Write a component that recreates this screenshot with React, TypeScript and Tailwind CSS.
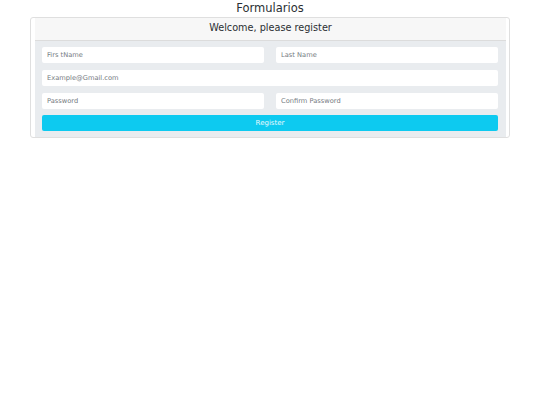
import React from "react";

const fields: { placeholder: string; type: string }[][] = [
  [
    { placeholder: "Firs tName", type: "text" },
    { placeholder: "Last Name", type: "text" },
  ],
  [{ placeholder: "Example@Gmail.com", type: "email" }],
  [
    { placeholder: "Password", type: "password" },
    { placeholder: "Confirm Password", type: "password" },
  ],
];

const Input = ({ placeholder, type }: { placeholder: string; type: string }) => (
  <input
    type={type}
    placeholder={placeholder}
    className="h-[16px] w-full rounded-[2px] bg-white px-[5px] text-[6.7px] text-[#212529] outline-none placeholder:text-[#757b82]"
  />
);

export default function App() {
  return (
    <div className="min-h-[405px] bg-white font-['DejaVu_Sans',sans-serif] text-[#2b2f33]">
      {/* Title */}
      <h1 className="text-center text-[11.5px] leading-[17px]">Formularios</h1>

      {/* Card */}
      <div className="mx-[30px] w-[480px] rounded-[3px] border border-[#dfdfdf] pl-[4px] pr-[3px]">
        {/* Card Header */}
        <div className="flex h-[23px] items-center justify-center border-b border-[#dcdcdc] bg-[#f7f7f7] pb-[1px] text-[9.7px]">
          Welcome, please register
        </div>

        {/* Form Body */}
        <form className="flex flex-col gap-[7px] bg-[#e9ecef] pb-[6px] pl-[7px] pr-[8px] pt-[6px]">
          {fields.map((row, i) => (
            <div key={i} className={row.length > 1 ? "grid grid-cols-2 gap-[12px]" : "flex"}>
              {row.map((f) => (
                <Input key={f.placeholder} placeholder={f.placeholder} type={f.type} />
              ))}
            </div>
          ))}
          <button
            type="button"
            className="-mt-[1px] h-[16px] w-full rounded-[2px] bg-[#0dcaf0] text-[7px] text-[#e6f9fd]"
          >
            Register
          </button>
        </form>
      </div>
    </div>
  );
}
